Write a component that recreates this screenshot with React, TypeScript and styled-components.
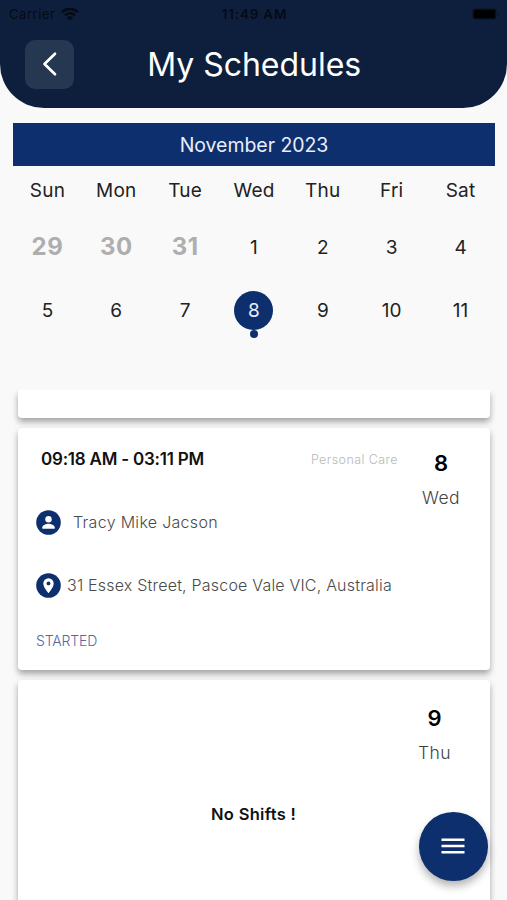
import React from "react";
import styled, { createGlobalStyle } from "styled-components";

const navy = "#0e2f6d";

const GlobalStyle = createGlobalStyle`
  * { box-sizing: border-box; }
  html, body { margin: 0; padding: 0; }
  body { background: #f9f9f9; font-family: Inter, "Liberation Sans", sans-serif; }
`;

const Screen = styled.main`
  position: relative;
  width: 507px;
  height: 900px;
  overflow: hidden;
  display: flex;
  flex-direction: column;
  background: #f9f9f9;
`;

const Header = styled.header`
  flex: none;
  height: 108px;
  background: #0e1f3d;
  border-radius: 0 0 44px 44px;
`;

const StatusBar = styled.div`
  display: grid;
  grid-template-columns: 1fr auto 1fr;
  align-items: center;
  height: 28px;
  padding: 0 7px 0 9px;
  color: #050a14;
  font-size: 13px;
  line-height: 28px;
`;

const Carrier = styled.div`
  display: flex;
  align-items: center;
  gap: 6px;
  letter-spacing: 0.55px;
`;

const Clock = styled.div`
  font-size: 13.5px;
  font-weight: 600;
  letter-spacing: 0.8px;
`;

const Battery = styled.svg`
  justify-self: end;
  display: block;
`;

const TitleBar = styled.div`
  display: grid;
  grid-template-columns: 49px 1fr 49px;
  align-items: center;
  height: 49px;
  margin: 11.5px 24px 0 25.3px;
`;

const BackButton = styled.button`
  display: grid;
  place-items: center;
  width: 49px;
  height: 49px;
  padding: 0;
  border: 0;
  border-radius: 10px;
  background: #263752;
`;

const Title = styled.h1`
  margin: 0;
  color: #fff;
  font-size: 32px;
  font-weight: 400;
  line-height: 49px;
  letter-spacing: -0.02px;
  text-align: center;
`;

const Calendar = styled.section`
  flex: none;
  height: 267px;
  margin: 15px 12px 0 13px;
`;

const Month = styled.div`
  height: 43px;
  background: ${navy};
  color: #e9eef8;
  font-size: 19.5px;
  line-height: 44px;
  letter-spacing: -0.05px;
  text-align: center;
`;

const Days = styled.div`
  display: grid;
  grid-template-columns: repeat(7, 1fr);
  grid-template-rows: 49px 64px 63px;
  place-items: center;
  color: #222;
  font-size: 19px;
`;

const Weekday = styled.span`
  letter-spacing: 0.25px;
`;

const Day = styled.span<{ $muted?: boolean; $selected?: boolean }>`
  position: relative;
  display: grid;
  place-items: center;
  width: 39px;
  height: 39px;
  border-radius: 50%;
  color: ${(p) => (p.$selected ? "#e9eef8" : p.$muted ? "#aeaeae" : "#222")};
  background: ${(p) => (p.$selected ? navy : "transparent")};
  font-size: ${(p) => (p.$muted ? "24px" : "19px")};
  font-weight: ${(p) => (p.$muted ? 700 : 400)};
  letter-spacing: ${(p) => (p.$muted ? "0.5px" : "0")};
  line-height: ${(p) => (p.$muted ? "27px" : "normal")};
  padding-bottom: ${(p) => (p.$muted ? "2px" : "0")};
`;

const EventDot = styled.i`
  position: absolute;
  left: 15.5px;
  top: 39px;
  width: 8px;
  height: 8px;
  border-radius: 50%;
  background: ${navy};
`;

const ShiftList = styled.section`
  flex: 1;
  min-height: 0;
  overflow: hidden;
  display: flex;
  flex-direction: column;
  gap: 10px;
  padding: 0 17px 0 18px;
`;

const Card = styled.article<{ $height: number; $first?: boolean }>`
  flex: none;
  display: grid;
  grid-template-columns: 1fr 98px;
  height: ${(p) => p.$height}px;
  border-radius: ${(p) => (p.$first ? "0 0 4px 4px" : "4px")};
  background: #fff;
  box-shadow: 0 4px 6px rgba(0, 0, 0, 0.34);
`;

const Shift = styled.div`
  padding: 14px 0 0 18px;
`;

const ShiftTop = styled.div`
  display: flex;
  justify-content: space-between;
  height: 34px;
  margin-right: -6px;
  padding: 0 0 0 5px;
  line-height: 34px;
`;

const Time = styled.strong`
  color: #111;
  font-size: 17px;
  font-weight: 600;
  letter-spacing: -0.22px;
  white-space: nowrap;
`;

const Service = styled.span`
  color: #b9b9b9;
  font-size: 12.5px;
  font-weight: 300;
  letter-spacing: 0.43px;
  line-height: 36px;
  white-space: nowrap;
`;

const Detail = styled.div<{ $gap: number; $top: number; $tracking: number }>`
  display: flex;
  align-items: center;
  gap: ${(p) => p.$gap}px;
  height: 26px;
  margin-top: ${(p) => p.$top}px;
  color: #4a4a4a;
  font-size: 16px;
  font-weight: 300;
  letter-spacing: ${(p) => p.$tracking}px;
  white-space: nowrap;
`;

const Status = styled.div`
  margin-top: 33px;
  color: #5867a2;
  font-size: 14px;
  font-weight: 300;
  line-height: 20px;
  letter-spacing: -0.15px;
`;

const DateColumn = styled.div<{ $shift?: number; $top: number }>`
  display: flex;
  flex-direction: column;
  align-items: center;
  padding-top: ${(p) => p.$top}px;
  margin-right: ${(p) => p.$shift ?? 0}px;
`;

const DateNumber = styled.strong`
  color: #000;
  font-size: 22px;
  font-weight: 600;
  line-height: 30px;
`;

const DateName = styled.span`
  margin-top: 6px;
  color: #444;
  font-size: 17.5px;
  font-weight: 300;
  line-height: 28px;
  letter-spacing: 0.4px;
`;

const Empty = styled.div`
  padding: 120px 0 0 193px;
  color: #111;
  font-size: 16.5px;
  font-weight: 600;
  line-height: 28px;
  letter-spacing: 0.3px;
  white-space: nowrap;
`;

const MenuButton = styled.button`
  position: absolute;
  right: 19.5px;
  bottom: 19.5px;
  display: grid;
  place-items: center;
  width: 68.5px;
  height: 68.5px;
  padding: 0;
  border: 0;
  border-radius: 50%;
  background: ${navy};
  box-shadow: 0 5px 9px rgba(0, 0, 0, 0.3);
`;

const weekdays = ["Sun", "Mon", "Tue", "Wed", "Thu", "Fri", "Sat"];
const dates = [29, 30, 31, 1, 2, 3, 4, 5, 6, 7, 8, 9, 10, 11];

function WifiIcon() {
  return (
    <svg width="18" height="14" viewBox="0 0 18 14" fill="none" stroke="currentColor" strokeWidth="2.5">
      <path d="M1 5.2C5.5 1 12.5 1 17 5.2M4 8.3c2.8-2.6 7.2-2.6 10 0" />
      <path d="M9 13.4 5.9 10.4c1.7-1.5 4.5-1.5 6.2 0Z" fill="currentColor" stroke="none" />
    </svg>
  );
}

function PersonIcon() {
  return (
    <svg width="25" height="25" viewBox="0 0 25 25">
      <circle cx="12.5" cy="12.5" r="12.3" fill={navy} />
      <circle cx="12.5" cy="9.3" r="3.2" fill="#fff" />
      <path d="M6.3 18.8v-1.5c0-2.3 4.1-3.5 6.2-3.5s6.2 1.2 6.2 3.5v1.5Z" fill="#fff" />
    </svg>
  );
}

function PinIcon() {
  return (
    <svg width="25" height="25" viewBox="0 0 25 25">
      <circle cx="12.5" cy="12.5" r="12.3" fill={navy} />
      <path
        d="M12.5 5.2a5.2 5.2 0 0 0-5.2 5.2c0 3.9 5.2 9.7 5.2 9.7s5.2-5.8 5.2-9.7a5.2 5.2 0 0 0-5.2-5.2Z"
        fill="#fff"
      />
      <circle cx="12.5" cy="10.4" r="1.9" fill={navy} />
    </svg>
  );
}

export default function App() {
  return (
    <Screen>
      <GlobalStyle />
      <Header>
        <StatusBar>
          <Carrier>
            Carrier
            <WifiIcon />
          </Carrier>
          <Clock>11:49 AM</Clock>
          <Battery width="28" height="12" viewBox="0 0 28 12">
            <rect x="0.5" y="0.5" width="24" height="11" rx="3.2" fill="#07101f" />
            <rect x="2" y="2" width="21" height="8" rx="1.5" fill="#000" />
            <path d="M26 4c1.4.6 1.4 3.4 0 4Z" fill="#07101f" />
          </Battery>
        </StatusBar>
        <TitleBar>
          <BackButton aria-label="Back">
            <svg width="16" height="26" viewBox="0 0 16 26" fill="none" stroke="#fff" strokeWidth="2.7" strokeLinecap="round" strokeLinejoin="round">
              <path d="M13 2.8 2.5 13 13 23.2" />
            </svg>
          </BackButton>
          <Title>My Schedules</Title>
        </TitleBar>
      </Header>

      <Calendar>
        <Month>November 2023</Month>
        <Days>
          {weekdays.map((name) => (
            <Weekday key={name}>{name}</Weekday>
          ))}
          {dates.map((date) => (
            <Day key={date} $muted={date > 28} $selected={date === 8}>
              {date}
              {date === 8 && <EventDot />}
            </Day>
          ))}
        </Days>
      </Calendar>

      <ShiftList>
        <Card $height={28} $first />
        <Card $height={242}>
          <Shift>
            <ShiftTop>
              <Time>09:18 AM - 03:11 PM</Time>
              <Service>Personal Care</Service>
            </ShiftTop>
            <Detail $gap={12} $top={33} $tracking={0.3}>
              <PersonIcon />
              <span>Tracy Mike Jacson</span>
            </Detail>
            <Detail $gap={6} $top={37} $tracking={0.2}>
              <PinIcon />
              <span>31 Essex Street, Pascoe Vale VIC, Australia</span>
            </Detail>
            <Status>STARTED</Status>
          </Shift>
          <DateColumn $top={20}>
            <DateNumber>8</DateNumber>
            <DateName>Wed</DateName>
          </DateColumn>
        </Card>
        <Card $height={242}>
          <Empty>No Shifts !</Empty>
          <DateColumn $shift={13} $top={23}>
            <DateNumber>9</DateNumber>
            <DateName>Thu</DateName>
          </DateColumn>
        </Card>
      </ShiftList>

      <MenuButton aria-label="Menu">
        <svg width="24" height="18" viewBox="0 0 24 18" stroke="#fff" strokeWidth="2.6">
          <path d="M.5 2.8h23M.5 9h23M.5 15.2h23" />
        </svg>
      </MenuButton>
    </Screen>
  );
}
